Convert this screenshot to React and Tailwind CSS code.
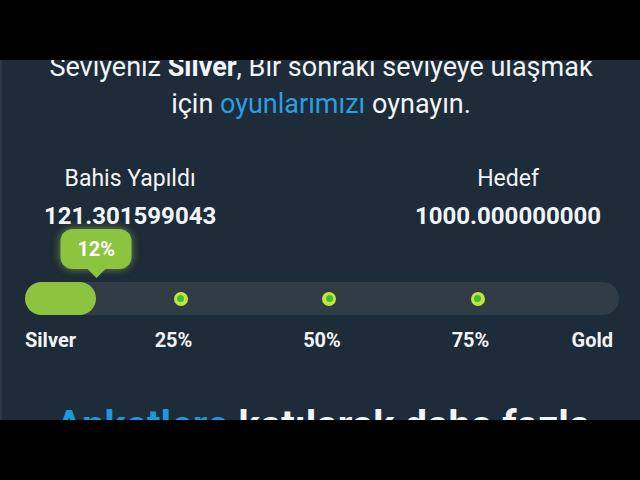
import React from "react";

const font = { fontFamily: "Roboto, 'Noto Sans', sans-serif" };

export default function App() {
  const progress = 12;
  const ticks = [25, 50, 75];
  return (
    <div className="w-[640px] h-[480px] bg-black flex flex-col overflow-hidden" style={font}>
      <div className="h-[60px] bg-black shrink-0" />
      <div className="h-[360px] shrink-0 overflow-hidden bg-[#1e2b38] border-l-2 border-[#2c3845] text-[#f2f5f7] flex flex-col">
        <div className="mt-[-11px] text-center text-[27px] leading-[37px] whitespace-nowrap">
          <p>
            Seviyeniz <span className="font-bold">Silver</span>, Bir sonraki seviyeye ulaşmak
          </p>
          <p>
            için <span className="text-[#2a9fe0]">oyunlarımızı</span> oynayın.
          </p>
        </div>

        <div className="mt-[41px] flex justify-between ml-[42px] mr-[39px]">
          <div className="flex flex-col items-center">
            <span className="text-[23px] leading-[30px]">Bahis Yapıldı</span>
            <span className="mt-[8px] text-[24px] leading-[28px] font-bold">121.301599043</span>
          </div>
          <div className="flex flex-col items-center">
            <span className="text-[23px] leading-[30px]">Hedef</span>
            <span className="mt-[8px] text-[24px] leading-[28px] font-bold">1000.000000000</span>
          </div>
        </div>

        <div className="relative ml-[23px] mr-[21px] mt-[-1px] pt-[53px]">
          <div
            className="absolute top-0 -translate-x-1/2 flex flex-col items-center"
            style={{ left: `${progress}%` }}
          >
            <div className="w-[71px] h-[40px] rounded-[12px] bg-[#8cc43f] shadow-[0_0_9px_rgba(170,225,90,0.55)] flex items-center justify-center text-[20px] font-bold text-white">
              12%
            </div>
            <div className="w-0 h-0 border-l-[9px] border-r-[9px] border-t-[9px] border-l-transparent border-r-transparent border-t-[#8cc43f]" />
          </div>
          <div className="relative h-[33px] rounded-full bg-[#313c47]">
            <div className="absolute left-0 top-0 h-full rounded-full bg-[#8cc43f]" style={{ width: `${progress}%` }} />
            {ticks.map((t) => (
              <div
                key={t}
                className="absolute top-1/2 -translate-y-1/2 w-[14px] h-[14px] rounded-full bg-[#c3e63a] flex items-center justify-center"
                style={{ left: `${t}%` }}
              >
                <div className="w-[7px] h-[7px] rounded-full bg-[#3cc03a]" />
              </div>
            ))}
          </div>
          <div className="relative mt-[13px] flex justify-between text-[20px] leading-[24px] font-bold pr-[6px]">
            <span>Silver</span>
            {ticks.map((t) => (
              <span key={t} className="absolute top-0 -translate-x-1/2" style={{ left: `${t}%` }}>
                {t}%
              </span>
            ))}
            <span>Gold</span>
          </div>
        </div>

        <div className="mt-[50px] text-center text-[40px] leading-[48px] font-bold whitespace-nowrap pl-[4px]">
          <span className="text-[#1a9ade]">Anketlere</span> katılarak daha fazla
        </div>
      </div>
      <div className="h-[60px] bg-black shrink-0" />
    </div>
  );
}
